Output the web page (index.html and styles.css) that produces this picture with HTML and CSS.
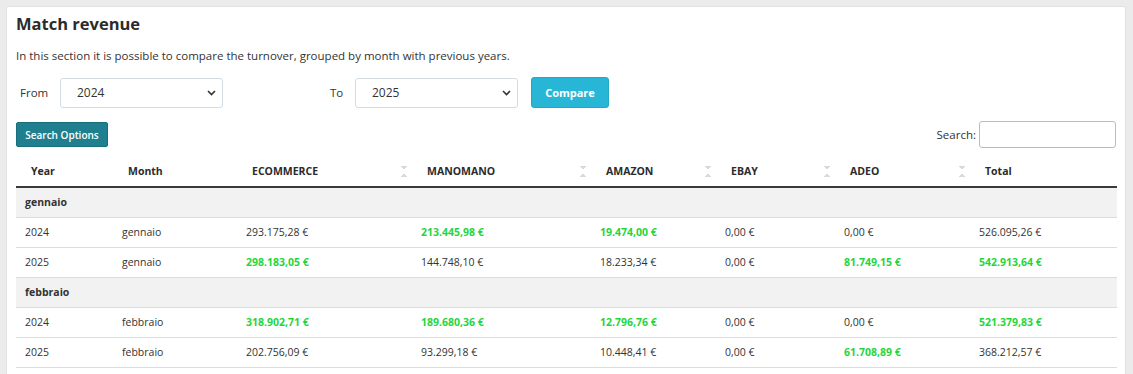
FILE: index.html
```html
<!DOCTYPE html>
<html>
<head>
<meta charset="utf-8">
<link rel="stylesheet" href="styles.css">
</head>
<body>
<div class="card">
  <h1 class="title">Match revenue</h1>
  <p class="desc">In this section it is possible to compare the turnover, grouped by month with previous years.</p>
  <div class="filters">
    <label class="lbl lbl-from">From</label>
    <div class="select"><span>2024</span><svg width="9" height="6" viewBox="0 0 9 6"><path d="M1 1l3.5 3.5L8 1" fill="none" stroke="#333" stroke-width="1.6"/></svg></div>
    <label class="lbl lbl-to">To</label>
    <div class="select"><span>2025</span><svg width="9" height="6" viewBox="0 0 9 6"><path d="M1 1l3.5 3.5L8 1" fill="none" stroke="#333" stroke-width="1.6"/></svg></div>
    <button class="btn-compare">Compare</button>
  </div>
  <div class="toolbar">
    <button class="btn-options">Search Options</button>
    <div class="search"><label>Search:</label><input type="text"></div>
  </div>
  <table class="grid">
    <colgroup>
      <col style="width:97px"><col style="width:124px"><col style="width:175px"><col style="width:179px"><col style="width:125px"><col style="width:119px"><col style="width:135px"><col style="width:147px">
    </colgroup>
    <thead>
      <tr>
        <th>Year</th><th>Month</th>
        <th class="sort">ECOMMERCE</th><th class="sort">MANOMANO</th><th class="sort">AMAZON</th><th class="sort">EBAY</th><th class="sort">ADEO</th>
        <th>Total</th>
      </tr>
    </thead>
    <tbody>
      <tr class="group"><td colspan="8">gennaio</td></tr>
      <tr><td>2024</td><td>gennaio</td><td>293.175,28 €</td><td class="up">213.445,98 €</td><td class="up">19.474,00 €</td><td>0,00 €</td><td>0,00 €</td><td>526.095,26 €</td></tr>
      <tr><td>2025</td><td>gennaio</td><td class="up">298.183,05 €</td><td>144.748,10 €</td><td>18.233,34 €</td><td>0,00 €</td><td class="up">81.749,15 €</td><td class="up">542.913,64 €</td></tr>
      <tr class="group"><td colspan="8">febbraio</td></tr>
      <tr><td>2024</td><td>febbraio</td><td class="up">318.902,71 €</td><td class="up">189.680,36 €</td><td class="up">12.796,76 €</td><td>0,00 €</td><td>0,00 €</td><td class="up">521.379,83 €</td></tr>
      <tr><td>2025</td><td>febbraio</td><td>202.756,09 €</td><td>93.299,18 €</td><td>10.448,41 €</td><td>0,00 €</td><td class="up">61.708,89 €</td><td>368.212,57 €</td></tr>
    </tbody>
  </table>
</div>
</body>
</html>
```
FILE: styles.css
```css
* { box-sizing: border-box; }
html, body { margin: 0; padding: 0; }
body {
  background: #ebebeb;
  font-family: "Open Sans", "Liberation Sans", sans-serif;
  color: #333;
  padding: 6px 7px 0 6px;
  height: 374px;
  overflow: hidden;
}
.card {
  background: #fff;
  border: 1px solid #e2e2e2;
  border-radius: 3px;
  padding: 5px 9px 20px 9px;
}
.title {
  font-size: 16.5px;
  font-weight: 700;
  margin: 0;
  line-height: 24px;
  color: #2b2b2b;
}
.desc {
  font-size: 11.5px;
  margin: 10px 0 0 0;
  line-height: 20px;
}
.filters {
  display: flex;
  align-items: center;
  margin-top: 11px;
  height: 31px;
}
.lbl { font-size: 11.5px; }
.lbl-from { margin-left: 4px; width: 40px; }
.lbl-to { margin-left: 107px; width: 25px; }
.select {
  width: 163px;
  height: 30px;
  border: 1px solid #d3dce2;
  border-radius: 3px;
  display: flex;
  align-items: center;
  justify-content: space-between;
  padding: 0 6px 1px 16px;
  font-size: 12px;
}
.select svg { margin-top: 2px; }
.btn-compare {
  margin-left: 13px;
  height: 31px;
  width: 78px;
  background: #27b6d5;
  border: 1px solid #22a9c6;
  border-radius: 3px;
  color: #fff;
  font-family: inherit;
  font-weight: 700;
  font-size: 11px;
  padding: 0;
}
.toolbar {
  display: flex;
  justify-content: space-between;
  align-items: center;
  margin-top: 13px;
}
.btn-options {
  height: 25px;
  width: 92px;
  background: #1f7f8f;
  border: 1px solid #1a6f7d;
  border-radius: 2px;
  color: #fff;
  font-family: inherit;
  font-size: 10px;
  font-weight: 600;
  padding: 0;
}
.search { display: flex; align-items: center; gap: 3px; font-size: 11.5px; }
.search input {
  width: 137px;
  height: 27px;
  border: 1px solid #bbb;
  border-radius: 3px;
  margin: 0;
}
.grid {
  width: 1101px;
  table-layout: fixed;
  border-collapse: collapse;
  margin-top: 13px;
  font-size: 10.5px;
}
.grid th {
  text-align: left;
  font-weight: 700;
  font-size: 10.5px;
  line-height: 15px;
  padding: 3px 10px 7px 15px;
  border-bottom: 2px solid #3a3a3a;
  position: relative;
  color: #2b2b2b;
}
.grid th.sort::after {
  content: "";
  position: absolute;
  right: 5px;
  top: 5px;
  width: 6px;
  height: 11px;
  background:
    linear-gradient(to top right, transparent 50%, #d9d9d9 50%) 0 0 / 3px 4px no-repeat,
    linear-gradient(to top left, transparent 50%, #d9d9d9 50%) 3px 0 / 3px 4px no-repeat,
    linear-gradient(to bottom right, transparent 50%, #d9d9d9 50%) 0 7px / 3px 4px no-repeat,
    linear-gradient(to bottom left, transparent 50%, #d9d9d9 50%) 3px 7px / 3px 4px no-repeat;
}
.grid td {
  padding: 0 9px;
  height: 30px;
  border-bottom: 1px solid #d5dee5;
  white-space: nowrap;
}
.grid tr.group td {
  background: #f2f2f2;
  font-weight: 700;
}
.grid td.up { color: #1fd63c; font-weight: 700; }
```
